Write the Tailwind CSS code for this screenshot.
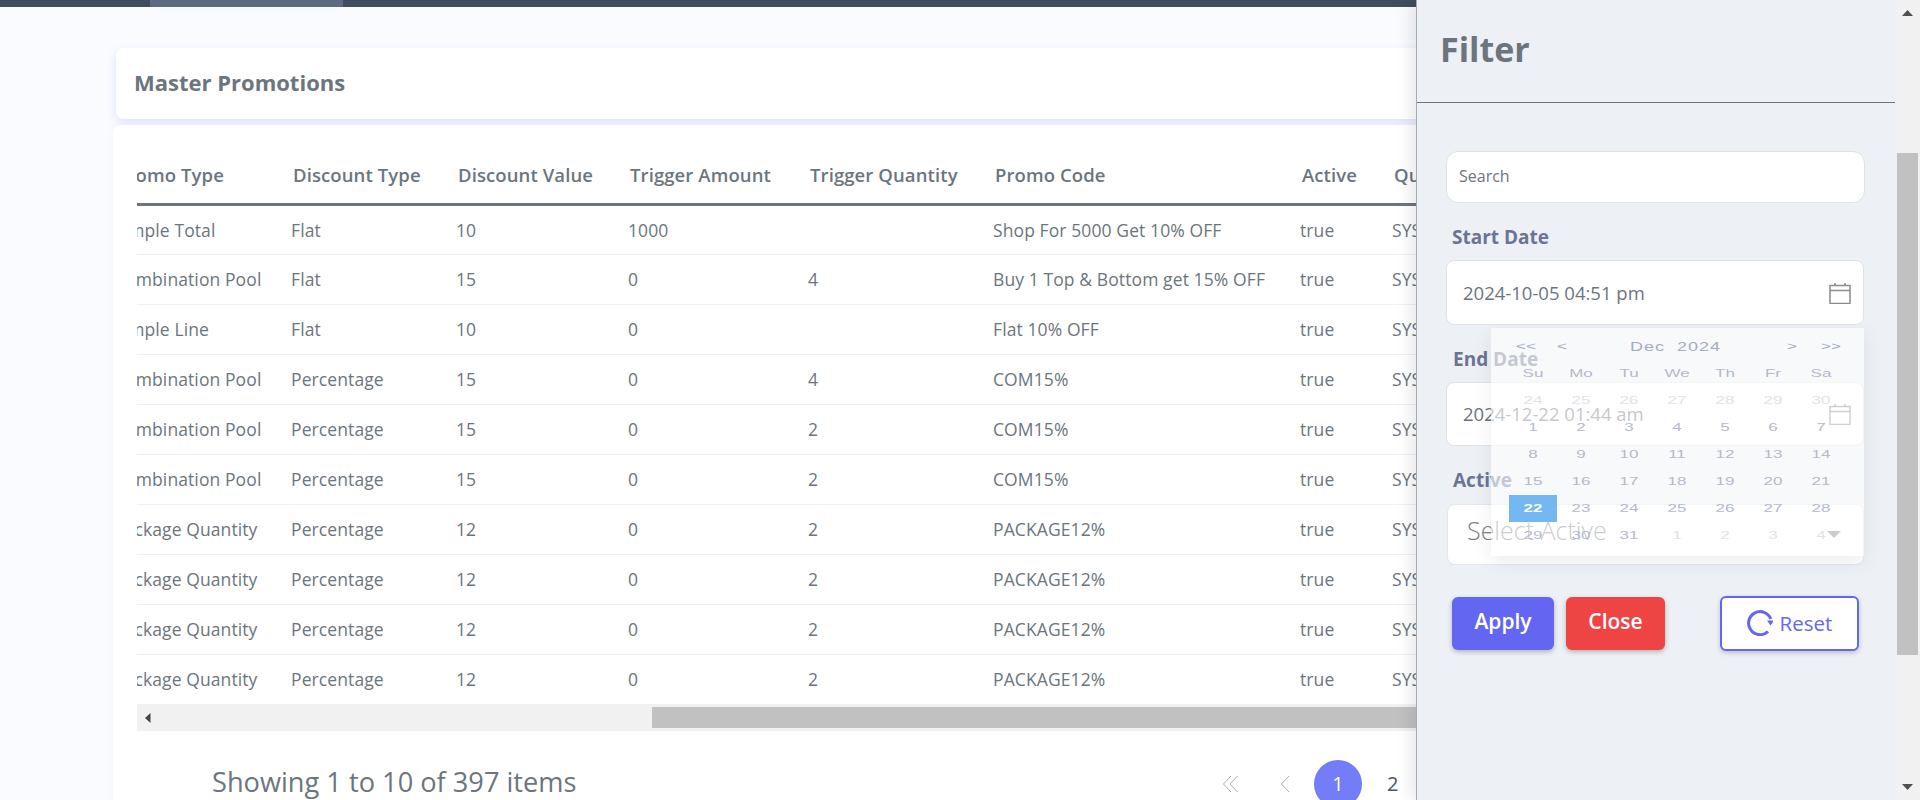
<!doctype html>
<html lang="en">
<head>
<meta charset="utf-8">
<title>Master Promotions</title>
<script src="https://cdn.jsdelivr.net/npm/@tailwindcss/browser@4"></script>
</head>
<body class="m-0 overflow-hidden">
<div class="relative flex h-[800px] w-[1920px] overflow-hidden bg-[#f9fbff] font-['Open_Sans',sans-serif] text-[#6c757d]">
  <!-- page -->
  <div class="relative w-[1897px] shrink-0 overflow-hidden">
    <div class="flex h-[7px] bg-[#3f4d5e]">
      <div class="ml-[150px] w-[193px] bg-[#5c6b82]"></div>
    </div>
    <div class="ml-[116px] mt-[41px] flex h-[71px] items-center rounded-lg bg-white pb-[2px] pl-[18px] shadow-[0_4px_10px_rgba(99,102,241,0.16)]">
      <h1 class="text-[22px] font-bold text-[#6c757d]">Master Promotions</h1>
    </div>
    <div class="ml-[113px] mt-[6px] h-[700px] rounded-lg bg-white pl-[24px] pt-[28px] shadow-[0_0_8px_rgba(99,102,241,0.05)]">
      <div class="w-[1279px] overflow-hidden">
        <table class="ml-[-23px] w-[1507px] table-fixed border-collapse text-left text-[17.5px] tracking-[0.1px] whitespace-nowrap [&_td]:h-[50px] [&_td]:border-b [&_td]:border-[#f0f1f3] [&_td]:p-0 [&_td]:pt-[1px] [&_th]:h-[51px] [&_th]:border-b-[3px] [&_th]:border-[#6c757d] [&_th]:pb-[6px] [&_th]:pl-[2px] [&_th]:text-[18.5px] [&_th]:font-semibold">
          <colgroup>
            <col class="w-[177px]"><col class="w-[165px]"><col class="w-[172px]"><col class="w-[180px]"><col class="w-[185px]"><col class="w-[307px]"><col class="w-[92px]"><col class="w-[229px]">
          </colgroup>
          <thead>
            <tr><th>Promo Type</th><th>Discount Type</th><th>Discount Value</th><th>Trigger Amount</th><th>Trigger Quantity</th><th>Promo Code</th><th>Active</th><th>Quantity</th></tr>
          </thead>
          <tbody>
            <tr><td>Simple Total</td><td>Flat</td><td>10</td><td>1000</td><td></td><td>Shop For 5000 Get 10% OFF</td><td>true</td><td>SYSTEM</td></tr>
            <tr><td>Combination Pool</td><td>Flat</td><td>15</td><td>0</td><td>4</td><td>Buy 1 Top &amp; Bottom get 15% OFF</td><td>true</td><td>SYSTEM</td></tr>
            <tr><td>Simple Line</td><td>Flat</td><td>10</td><td>0</td><td></td><td>Flat 10% OFF</td><td>true</td><td>SYSTEM</td></tr>
            <tr><td>Combination Pool</td><td>Percentage</td><td>15</td><td>0</td><td>4</td><td>COM15%</td><td>true</td><td>SYSTEM</td></tr>
            <tr><td>Combination Pool</td><td>Percentage</td><td>15</td><td>0</td><td>2</td><td>COM15%</td><td>true</td><td>SYSTEM</td></tr>
            <tr><td>Combination Pool</td><td>Percentage</td><td>15</td><td>0</td><td>2</td><td>COM15%</td><td>true</td><td>SYSTEM</td></tr>
            <tr><td>Package Quantity</td><td>Percentage</td><td>12</td><td>0</td><td>2</td><td>PACKAGE12%</td><td>true</td><td>SYSTEM</td></tr>
            <tr><td>Package Quantity</td><td>Percentage</td><td>12</td><td>0</td><td>2</td><td>PACKAGE12%</td><td>true</td><td>SYSTEM</td></tr>
            <tr><td>Package Quantity</td><td>Percentage</td><td>12</td><td>0</td><td>2</td><td>PACKAGE12%</td><td>true</td><td>SYSTEM</td></tr>
            <tr><td>Package Quantity</td><td>Percentage</td><td>12</td><td>0</td><td>2</td><td>PACKAGE12%</td><td>true</td><td>SYSTEM</td></tr>
          </tbody>
        </table>
        <div class="flex h-[26px] items-center bg-[#f1f1f1]">
          <svg class="ml-[8px] shrink-0" width="6" height="10" viewBox="0 0 6 10"><path d="M5.500 0v10L0 5z" fill="#444"/></svg>
          <div class="ml-[501px] h-[21px] flex-1 bg-[#c1c1c1]"></div>
        </div>
      </div>
      <div class="mt-[29px] flex h-[48px] items-center">
        <div class="ml-[75px] w-[1010px] shrink-0 pb-[2px] text-[27.200px]">Showing 1 to 10 of 397 items</div>
        <svg class="shrink-0" width="17" height="18" viewBox="0 0 17 18" fill="none" stroke="#aab0b6"><path d="M9 1 1.500 9 9 17M15.500 1 8 9l7.500 8"/></svg>
        <svg class="ml-[41px] shrink-0" width="10" height="18" viewBox="0 0 10 18" fill="none" stroke="#aab0b6"><path d="M9 1 1.500 9 9 17"/></svg>
        <div class="ml-[24px] flex h-[48px] w-[48px] shrink-0 items-center justify-center rounded-full bg-[#737df8] text-[20px] text-white">1</div>
        <div class="ml-[25px] text-[20px] text-[#4b5563]">2</div>
      </div>
    </div>

    <!-- filter drawer -->
    <aside class="absolute top-0 right-0 h-[800px] w-[481px] border-l border-[#a8adb3] bg-[#edf0f5] shadow-[-6px_0_14px_rgba(0,0,0,0.09)]">
      <div class="mr-[2px] flex h-[103px] items-center border-b border-[#6c757d] pb-[3px] pl-[23px]">
        <h2 class="text-[34px] font-bold text-[#6c757d]">Filter</h2>
      </div>
      <input class="ml-[29px] mt-[48px] block h-[52px] w-[419px] rounded-xl border border-[#dfe3e8] bg-white pl-[12px] pb-[2px] text-[16px] placeholder:text-[#6c757d]" placeholder="Search">
      <label class="ml-[35px] mt-[22px] block h-[24px] text-[19px] leading-[24px] font-bold text-[#6b7494]">Start Date</label>
      <div class="ml-[29px] mt-[11px] flex h-[65px] w-[418px] items-center justify-between rounded-lg border border-[#dfe3e8] bg-white pl-[16px] pr-[12px] text-[18.500px]">
        <span>2024-10-05 04:51 pm</span>
        <svg width="22" height="22" viewBox="0 0 22 22" fill="none" stroke="#8a8a8a" stroke-width="1.500"><path d="M1 3.500h20v18H1zM1 8.500h20M6 1v3M16 1v3"/></svg>
      </div>
      <label class="ml-[36px] mt-[22px] block h-[24px] text-[19px] leading-[24px] font-bold text-[#6b7494]">End Date</label>
      <div class="ml-[29px] mt-[11px] flex h-[64px] w-[418px] items-center justify-between rounded-lg border border-[#dfe3e8] bg-white pl-[16px] pr-[12px] text-[18.500px]">
        <span>2024-12-22 01:44 am</span>
        <svg width="22" height="22" viewBox="0 0 22 22" fill="none" stroke="#8a8a8a" stroke-width="1.500"><path d="M1 3.500h20v18H1zM1 8.500h20M6 1v3M16 1v3"/></svg>
      </div>
      <label class="ml-[36px] mt-[22px] block h-[24px] text-[19px] leading-[24px] font-bold text-[#6b7494]">Active</label>
      <div class="ml-[30px] mt-[12px] flex h-[61px] w-[417px] items-center justify-between rounded-lg border border-[#e4e7eb] bg-white pl-[19px] pr-[22px] text-[25px] font-light text-[#808080]">
        <span class="mb-[8px]">Select Active</span>
        <svg width="14" height="7" viewBox="0 0 14 7"><path d="M0 0h14L7 7z" fill="#808080"/></svg>
      </div>
      <div class="ml-[35px] mt-[32px] flex">
        <button class="h-[53px] w-[102px] rounded-md bg-[#6366f1] pb-[3px] text-[21px] font-semibold text-white shadow-[0_2px_5px_rgba(0,0,0,0.25)]">Apply</button>
        <button class="ml-[12px] h-[53px] w-[99px] rounded-md bg-[#ef4444] pb-[3px] text-[21px] font-semibold text-white shadow-[0_2px_5px_rgba(0,0,0,0.25)]">Close</button>
        <button class="ml-[55px] mt-[-1px] flex h-[55px] w-[139px] items-center justify-center gap-[7px] rounded-md border-2 border-[#6366f1] bg-white pb-[1px] text-[20.500px] text-[#6366f1] shadow-[0_2px_5px_rgba(0,0,0,0.2)]">
          <svg width="26" height="26" viewBox="0 0 26 26" fill="none" stroke="#6366f1" stroke-width="3"><path d="M21 21.500A11.500 11.500 0 1 1 23.800 9"/><path d="M20 10.500h7l-3.500 5z" fill="#6366f1" stroke="none"/></svg>
          Reset
        </button>
      </div>

      <!-- date picker, caught mid-fade -->
      <div class="absolute top-[328px] left-[74px] h-[228px] w-[373px] bg-white/60 pl-[18px] pt-[5px] font-['Liberation_Sans',sans-serif] shadow-[0_6px_18px_rgba(0,0,0,0.08)] [&_span]:inline-block [&_span]:scale-y-[0.66]">
        <div class="relative h-[27px] text-[17px] text-[#a3acc2]">
          <span class="absolute left-[7px] top-[1px]">&lt;&lt;</span>
          <span class="absolute left-[48px] top-[1px]">&lt;</span>
          <span class="absolute left-[121px] top-[1px] text-[18px] tracking-[1px] whitespace-pre">Dec  2024</span>
          <span class="absolute left-[278px] top-[1px]">&gt;</span>
          <span class="absolute left-[312px] top-[1px]">&gt;&gt;</span>
        </div>
        <div class="grid w-[336px] grid-cols-7 text-center text-[17px] leading-[27px] text-[#b3bacb] [&>div]:h-[27px]">
          <div><span>Su</span></div><div><span>Mo</span></div><div><span>Tu</span></div><div><span>We</span></div><div><span>Th</span></div><div><span>Fr</span></div><div><span>Sa</span></div>
          <div class="text-[#e1e3e8]"><span>24</span></div><div class="text-[#e1e3e8]"><span>25</span></div><div class="text-[#e1e3e8]"><span>26</span></div><div class="text-[#e1e3e8]"><span>27</span></div><div class="text-[#e1e3e8]"><span>28</span></div><div class="text-[#e1e3e8]"><span>29</span></div><div class="text-[#e1e3e8]"><span>30</span></div>
          <div><span>1</span></div><div><span>2</span></div><div><span>3</span></div><div><span>4</span></div><div><span>5</span></div><div><span>6</span></div><div><span>7</span></div>
          <div><span>8</span></div><div><span>9</span></div><div><span>10</span></div><div><span>11</span></div><div><span>12</span></div><div><span>13</span></div><div><span>14</span></div>
          <div><span>15</span></div><div><span>16</span></div><div><span>17</span></div><div><span>18</span></div><div><span>19</span></div><div><span>20</span></div><div><span>21</span></div>
          <div class="bg-[#74b8f2] font-bold text-white"><span>22</span></div><div><span>23</span></div><div><span>24</span></div><div><span>25</span></div><div><span>26</span></div><div><span>27</span></div><div><span>28</span></div>
          <div><span>29</span></div><div><span>30</span></div><div><span>31</span></div><div class="text-[#e1e3e8]"><span>1</span></div><div class="text-[#e1e3e8]"><span>2</span></div><div class="text-[#e1e3e8]"><span>3</span></div><div class="text-[#e1e3e8]"><span>4</span></div>
        </div>
      </div>
    </aside>
  </div>

  <!-- window scrollbar -->
  <div class="relative flex-1 bg-[#f1f1f1]">
    <svg class="absolute left-[5px] top-[10px]" width="11" height="6" viewBox="0 0 11 6"><path d="M0 6h11L5.500 0z" fill="#505050"/></svg>
    <div class="absolute top-[153px] left-0 h-[502px] w-[21px] bg-[#c1c1c1]"></div>
    <svg class="absolute left-[5px] top-[784px]" width="11" height="6" viewBox="0 0 11 6"><path d="M0 0h11L5.500 6z" fill="#505050"/></svg>
  </div>
</div>
</body>
</html>
